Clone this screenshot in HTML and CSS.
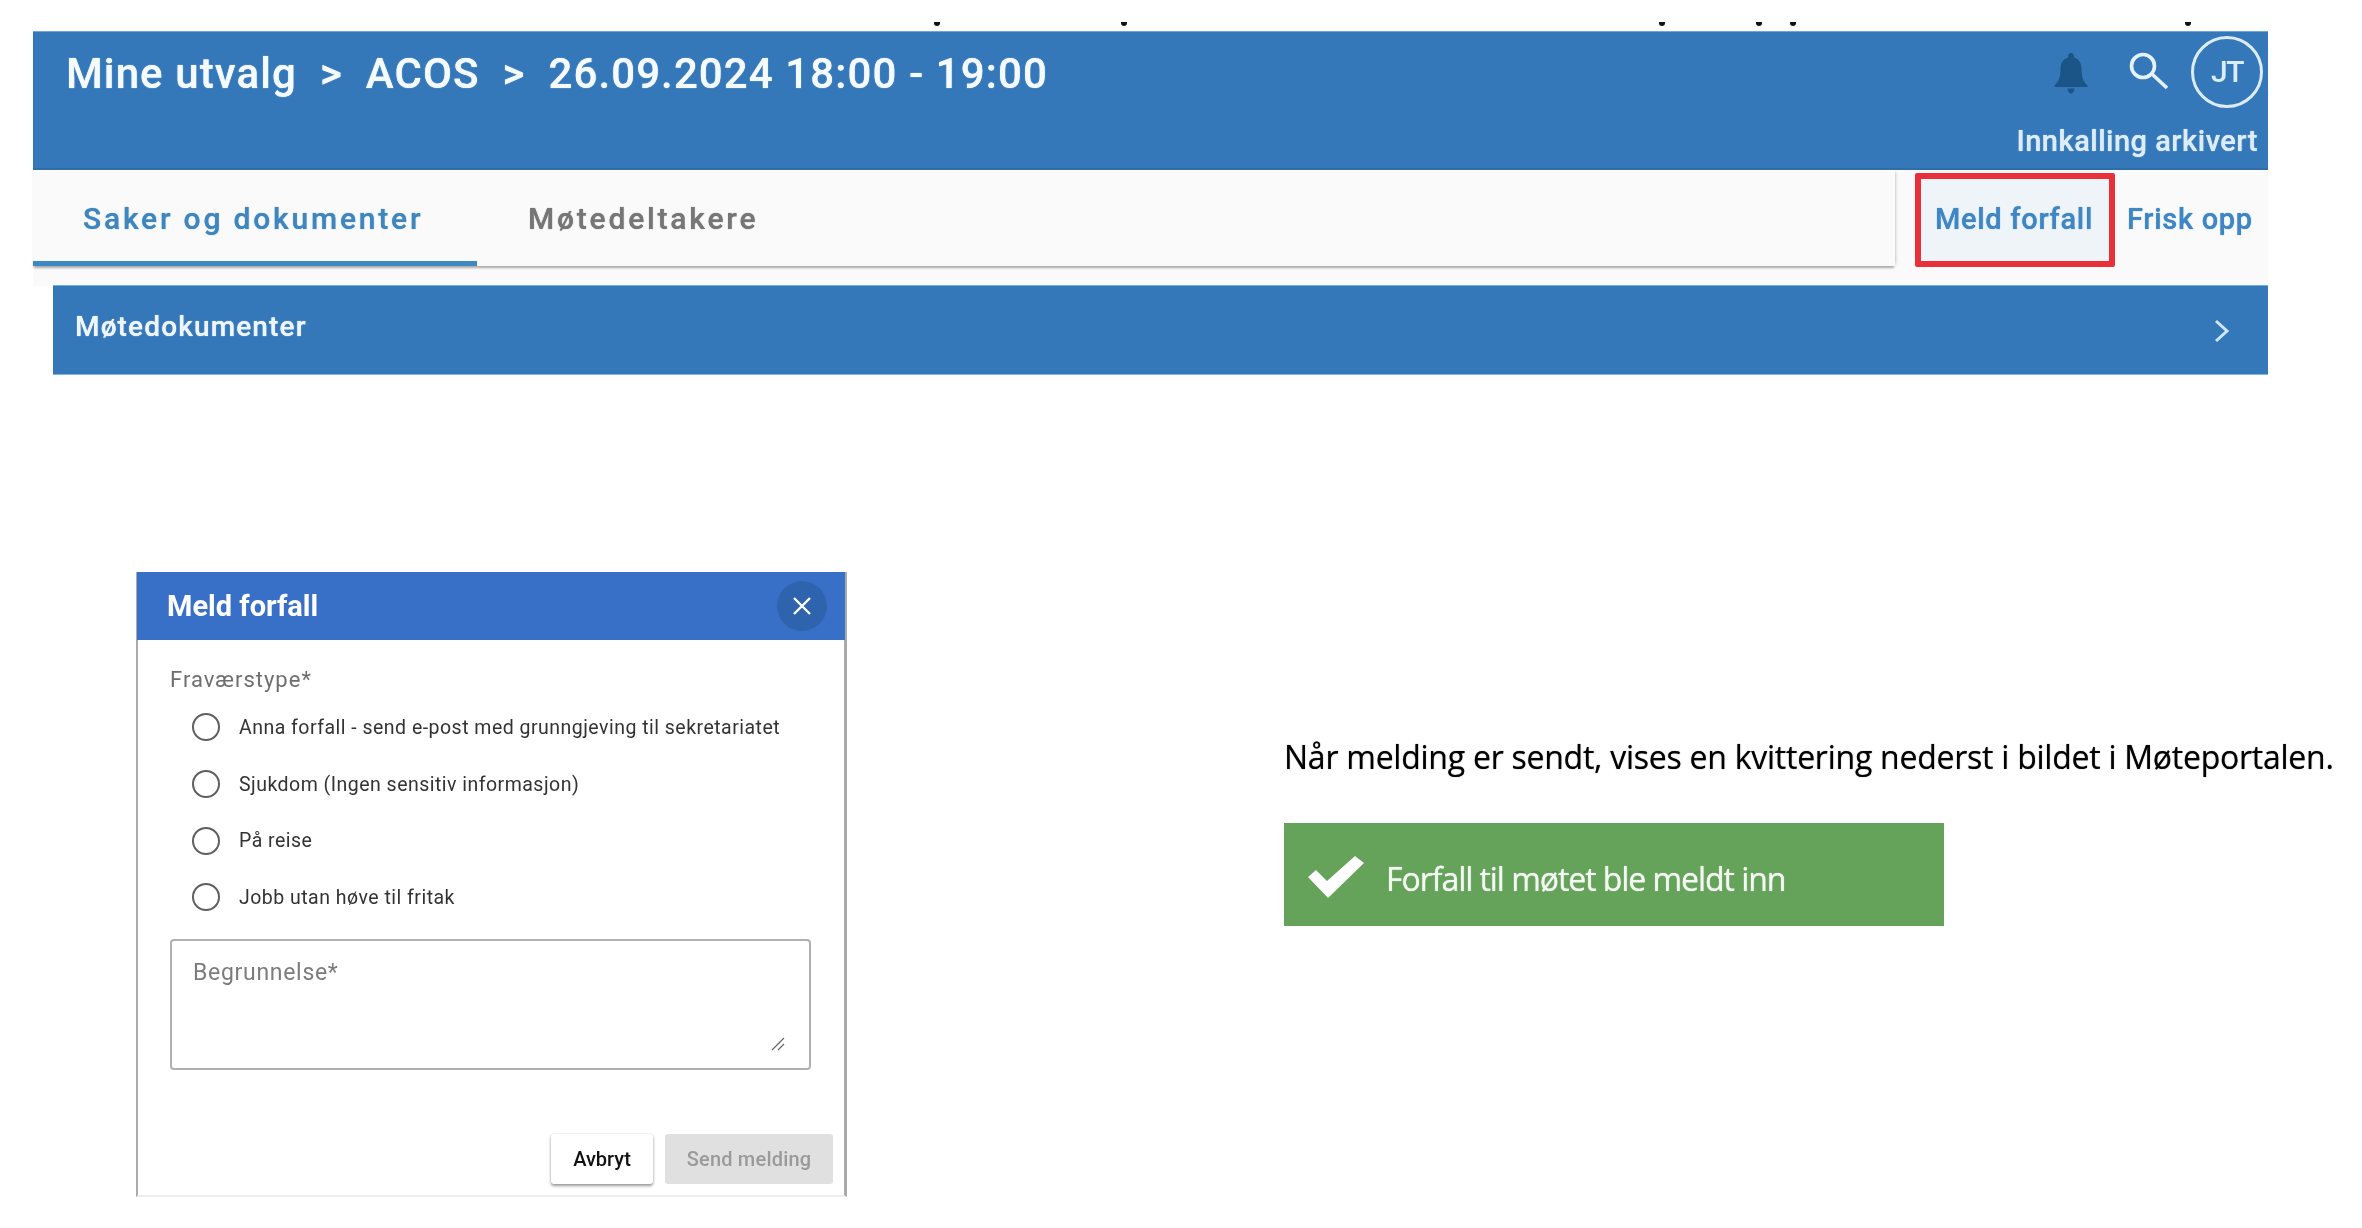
FILE: index.html
```html
<!DOCTYPE html>
<html lang="no">
<head>
<meta charset="utf-8">
<title>Meld forfall</title>
<link rel="stylesheet" href="styles.css">
</head>
<body>
<div class="specks">
  <i class="speck s1"></i><i class="speck s2"></i><i class="speck s3"></i><i class="speck s4"></i><i class="speck s5"></i><i class="speck s6"></i>
</div>
<section class="portal">
  <header class="appbar">
    <div class="crumbs"><span>Mine utvalg</span><span class="sep">&gt;</span><span>ACOS</span><span class="sep">&gt;</span><span>26.09.2024 18:00 - 19:00</span></div>
    <div class="appbar-side">
      <div class="app-icons">
        <svg class="bell" width="36" height="42" viewBox="0 0 34 42"><path fill="#1b5587" d="M17 1c-2 0-3 1.500-3 3.500v1C8.500 7 6.500 12 6.500 17c0 8-1.500 12-6 16.500v1.500h33v-1.500c-4.500-4.500-6-8.500-6-16.500 0-5-2-10-7.500-11.500v-1C20 2 19 1 17 1z"/><path fill="#1b5587" d="M13.500 36.500h7c0 2.500-1.500 5-3.500 5s-3.500-2.500-3.500-5z"/></svg>
        <svg class="search" width="42" height="38" viewBox="0 0 42 38" fill="none" stroke="#e6f2fa" stroke-width="3.600"><circle cx="15" cy="14" r="11.500"/><path d="M24 22l15 14"/></svg>
        <div class="avatar">JT</div>
      </div>
      <div class="status">Innkalling arkivert</div>
    </div>
  </header>
  <nav class="toolbar">
    <div class="tabs">
      <div class="tab active">Saker og dokumenter</div>
      <div class="tab">Møtedeltakere</div>
    </div>
    <div class="actions">
      <div class="action marked">Meld forfall</div>
      <div class="action">Frisk opp</div>
    </div>
  </nav>
  <div class="panel-row">
    <div class="panel"><span>Møtedokumenter</span>
      <svg width="18" height="24" viewBox="0 0 18 24" fill="none" stroke="#cfe6f5" stroke-width="3"><path d="M3 2l11 10L3 22"/></svg>
    </div>
  </div>
</section>
<section class="lower">
  <div class="dialog">
    <div class="dialog-head">
      <span class="dialog-title">Meld forfall</span>
      <div class="close"><svg width="20" height="20" viewBox="0 0 20 20" stroke="#fff" stroke-width="2.400"><path d="M2 2l16 16M18 2L2 18"/></svg></div>
    </div>
    <div class="dialog-body">
      <div class="field-label">Fraværstype*</div>
      <div class="options">
        <div class="option"><i class="radio"></i><span>Anna forfall - send e-post med grunngjeving til sekretariatet</span></div>
        <div class="option"><i class="radio"></i><span>Sjukdom (Ingen sensitiv informasjon)</span></div>
        <div class="option"><i class="radio"></i><span>På reise</span></div>
        <div class="option"><i class="radio"></i><span>Jobb utan høve til fritak</span></div>
      </div>
      <div class="textarea"><span>Begrunnelse*</span>
        <svg class="grip" width="14" height="14" viewBox="0 0 14 14" stroke="#666" stroke-width="1.200"><path d="M1 13L13 1M7 13l6-6"/></svg>
      </div>
    </div>
    <div class="dialog-foot">
      <div class="btn cancel">Avbryt</div>
      <div class="btn send">Send melding</div>
    </div>
  </div>
  <div class="receipt">
    <p class="note">Når melding er sendt, vises en kvittering nederst i bildet i Møteportalen.</p>
    <div class="toast">
      <svg width="56" height="42" viewBox="0 0 56 42"><path fill="#fff" d="M0 21l8-7 11 11L47 0l9 7-36 35z"/></svg>
      <span>Forfall til møtet ble meldt inn</span>
    </div>
  </div>
</section>
</body>
</html>
```
FILE: styles.css
```css
* { box-sizing: border-box; }
html, body { margin: 0; padding: 0; background: #fff; }
body { width: 2362px; height: 1228px; overflow: hidden; font-family: Roboto, "Liberation Sans", sans-serif; position: relative; }

.specks { position: absolute; left: 0; top: 22px; width: 100%; height: 4px; }
.speck { position: absolute; top: 0; width: 6px; height: 4px; background: #111; border-radius: 0 0 3px 3px; }
.s1 { left: 934px; } .s2 { left: 1121px; } .s3 { left: 1659px; } .s4 { left: 1756px; } .s5 { left: 1790px; } .s6 { left: 2185px; }

.portal { margin: 31px 0 0 33px; width: 2235px; filter: blur(0.6px); }
.appbar { height: 139px; background: #3578ba; border-bottom: 2px solid #2f6ca8; box-shadow: 0 2px 0 #6fb0da, inset 0 1px 0 #6aa8d6; display: flex; justify-content: space-between; color: #fff; }
.crumbs { display: flex; gap: 23px; padding: 18px 0 0 33px; font-size: 42px; font-weight: 500; line-height: 50px; letter-spacing: 1.1px; color: #f4fafd; text-shadow: 0 0 1px #f4fafd; }
.appbar-side { display: flex; flex-direction: column; align-items: flex-end; padding: 5px 5px 0 0; }
.app-icons { display: flex; align-items: center; gap: 24px; height: 72px; }
.bell { margin: 2px 15px 0 0; }
.search { margin-top: -2px; }
.avatar { width: 72px; height: 72px; border: 3px solid #dcecf7; border-radius: 50%; display: flex; align-items: center; justify-content: center; font-size: 30px; font-weight: 500; color: #dcecf7; margin-left: -3px; letter-spacing: -1.5px; padding-bottom: 2px; }
.status { margin-top: 16px; padding-right: 5px; font-size: 29px; font-weight: 500; line-height: 34px; color: #dcedf8; letter-spacing: 0.5px; white-space: nowrap; text-shadow: 0 0 1px #dcedf8; }

.toolbar { height: 96px; display: flex; background: #fafafa; }
.tabs { width: 1862px; height: 96px; display: flex; box-shadow: 0 3px 2px -1px #aaa, 3px 0 3px -2px #ccc; }
.tab { padding: 31px 50px 0 49px; font-size: 30px; font-weight: 500; letter-spacing: 2.8px; color: #767676; line-height: 36px; white-space: nowrap; text-shadow: 0 0 1px #767676; }
.tab.active { color: #3f86bf; width: 444px; border-bottom: 5px solid #3f89c2; padding-left: 50px; text-shadow: 0 0 1px #3f86bf; }
.tab:not(.active) { padding-left: 51px; }
.actions { display: flex; margin-left: 20px; }
.action { font-size: 29px; font-weight: 500; color: #3f86c4; line-height: 36px; padding-top: 31px; letter-spacing: 0.7px; white-space: nowrap; text-shadow: 0 0 1px #3f86c4; }
.action.marked { width: 200px; height: 94px; margin-top: 3px; padding: 27px 2px 0 0; text-align: center; border: 6px solid #e8303a; border-radius: 2px; background: #eff4f8; line-height: 26px; }
.action:not(.marked) { margin-left: 12px; }

.panel-row { padding: 20px 0 0 20px; height: 108px; background: linear-gradient(#fafafa 20px, #fff 20px); }
.panel { height: 88px; background: #3578ba; box-shadow: 0 -1px 0 #6fb0da, 0 1px 0 #7fb8dd; display: flex; align-items: center; justify-content: space-between; padding: 0 37px 8px 22px; color: #eef6fb; font-size: 28px; font-weight: 500; letter-spacing: 1.15px; text-shadow: 0 0 1px #eef6fb; }
.panel svg { margin-top: 10px; }

.lower { display: flex; padding-left: 136px; margin-top: 198px; }
.dialog { width: 711px; height: 625px; background: #fff; border: solid #aaa; border-width: 0 3px 2px 2px; border-bottom-color: #eee; display: flex; flex-direction: column; filter: blur(0.4px); }
.dialog-head { height: 68px; margin: 0 -1px 0 -1px; background: #3870c8; display: flex; align-items: center; justify-content: space-between; padding: 0 18px 0 30px; color: #fff; }
.dialog-title { font-size: 29px; font-weight: 700; }
.close { width: 50px; height: 50px; border-radius: 50%; background: #2e63ae; display: flex; align-items: center; justify-content: center; }
.dialog-body { flex: 1; padding: 26px 32px 0; }
.field-label { font-size: 22px; letter-spacing: 1px; color: #6f6f6f; line-height: 28px; }
.options { padding: 0 0 0 22px; margin-top: 5px; }
.option { height: 56.700px; display: flex; align-items: center; gap: 19px; font-size: 19.500px; letter-spacing: 0.48px; color: #333; }
.radio { width: 28px; height: 28px; border: 2.500px solid #5f5f5f; border-radius: 50%; flex: none; }
.textarea { margin-top: 13px; height: 131px; width: 641px; border: 2px solid #b0b0b0; border-radius: 4px; padding: 18px 21px; font-size: 23px; letter-spacing: 0.7px; color: #7c7c7c; position: relative; }
.grip { position: absolute; right: 24px; bottom: 17px; }
.dialog-foot { display: flex; justify-content: flex-end; gap: 12px; padding: 0 11px 11px 0; }
.btn { height: 50px; border-radius: 3px; display: flex; align-items: center; justify-content: center; font-size: 20px; font-weight: 500; }
.cancel { width: 102px; background: #fff; color: #111; box-shadow: 0 2px 3px #999, 0 0 2px #ddd; }
.send { width: 168px; background: #e0e0e0; color: #9a9a9a; letter-spacing: 0.2px; }

.receipt { margin-left: 437px; padding-top: 163px; filter: blur(0.35px); }
.note { margin: 0; font-family: "Open Sans", sans-serif; font-size: 32px; line-height: 44px; color: #000; white-space: nowrap; letter-spacing: -0.25px; text-shadow: 0 0 1px #555; }
.toast { margin-top: 44px; width: 660px; height: 103px; background: #65a25a; display: flex; align-items: center; gap: 22px; padding: 4px 0 0 24px; color: #f4f8f2; font-family: "Open Sans", sans-serif; font-size: 32px; letter-spacing: -1.05px; text-shadow: 0 0 1px #f4f8f2; }
.toast svg { flex: none; }
.toast span { padding-top: 3px; }
```
